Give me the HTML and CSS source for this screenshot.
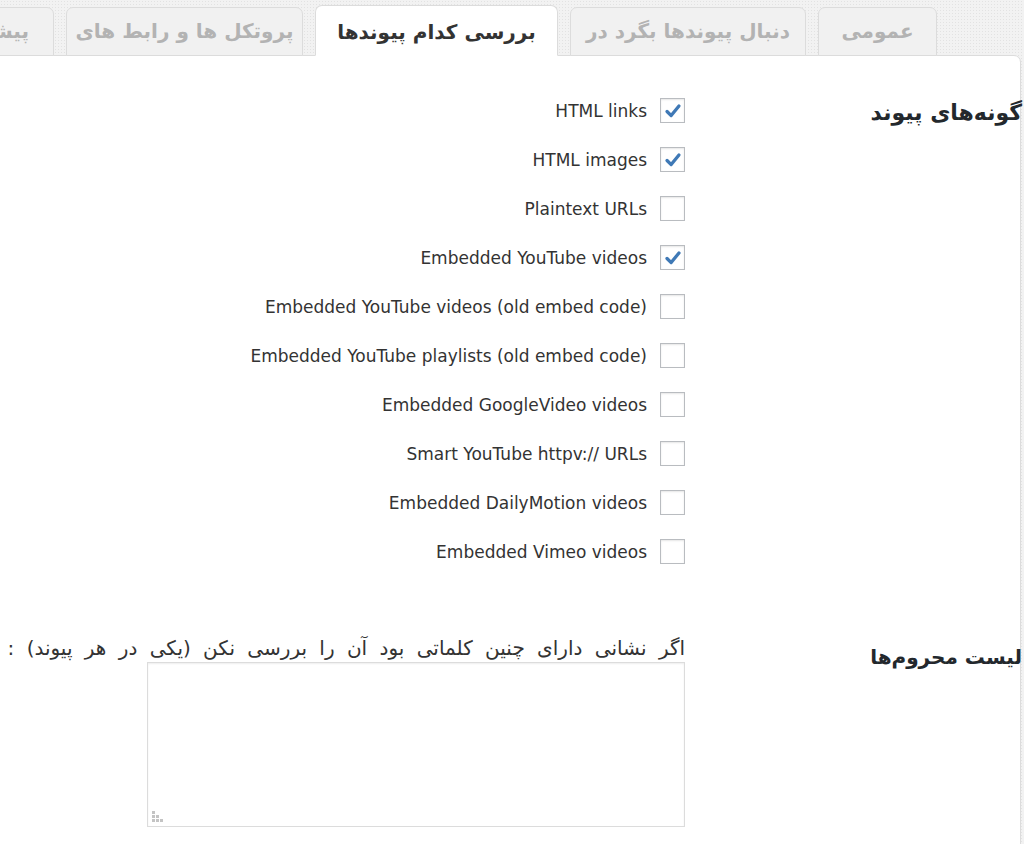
FILE: index.html
```html
<!DOCTYPE html>
<html lang="fa" dir="rtl">
<head>
<meta charset="utf-8">
<title>تنظیمات</title>
<link rel="stylesheet" href="styles.css">
</head>
<body>
<div class="page">
  <div class="wrap">
    <nav class="tabs">
      <a class="tab tab-general">عمومی</a>
      <a class="tab tab-where">دنبال پیوندها بگرد در</a>
      <a class="tab tab-which active">بررسی کدام پیوندها</a>
      <a class="tab tab-proto">پروتکل ها و رابط های</a>
      <a class="tab tab-adv">پیشرفته</a>
    </nav>
    <div class="panel">
      <div class="row row-types">
        <div class="th th-types">گونه‌های پیوند</div>
        <div class="td">
          <ul class="checks">
            <li><span class="box"><svg viewBox="0 0 24 24"><path d="M5.5 12.5 L10 17 L18.5 6.5"/></svg></span><span class="lbl">HTML links</span></li>
            <li><span class="box"><svg viewBox="0 0 24 24"><path d="M5.5 12.5 L10 17 L18.5 6.5"/></svg></span><span class="lbl">HTML images</span></li>
            <li><span class="box"></span><span class="lbl">Plaintext URLs</span></li>
            <li><span class="box"><svg viewBox="0 0 24 24"><path d="M5.5 12.5 L10 17 L18.5 6.5"/></svg></span><span class="lbl">Embedded YouTube videos</span></li>
            <li><span class="box"></span><span class="lbl">Embedded YouTube videos (old embed code)</span></li>
            <li><span class="box"></span><span class="lbl">Embedded YouTube playlists (old embed code)</span></li>
            <li><span class="box"></span><span class="lbl">Embedded GoogleVideo videos</span></li>
            <li><span class="box"></span><span class="lbl">Smart YouTube httpv:// URLs</span></li>
            <li><span class="box"></span><span class="lbl">Embedded DailyMotion videos</span></li>
            <li><span class="box"></span><span class="lbl">Embedded Vimeo videos</span></li>
          </ul>
        </div>
      </div>
      <div class="row row-exclude">
        <div class="th th-exclude">لیست محروم‌ها</div>
        <div class="td">
          <p class="desc">اگر نشانی دارای چنین کلماتی بود آن را بررسی نکن (یکی در هر پیوند) :</p>
          <div class="area">
            <textarea class="excl"></textarea>
            <span class="grip">
              <i></i><i></i><i></i>
              <i></i><i></i><i></i>
            </span>
          </div>
        </div>
      </div>
    </div>
  </div>
</div>
</body>
</html>
```

FILE: styles.css
```css
html, body {
  margin: 0;
  padding: 0;
}
body {
  direction: rtl;
  font-family: "DejaVu Sans", "Noto Sans", sans-serif;
  color: #444;
  background-color: #f2f2f2;
  background-image: radial-gradient(circle, #e2e2e2 0.7px, transparent 0.9px);
  background-size: 3px 3px;
}
.page {
  width: 1024px;
  height: 844px;
  overflow: hidden;
}
.wrap {
  width: 1400px;
  padding-right: 3px;
}
.tabs {
  display: flex;
  align-items: flex-end;
  gap: 12px;
  height: 56px;
  padding-right: 84px;
  margin-bottom: -1px;
  position: relative;
  z-index: 1;
}
.tab {
  box-sizing: border-box;
  height: 49px;
  line-height: 47px;
  padding: 0 22px;
  border: 1px solid #dcdcdc;
  border-radius: 7px 7px 0 0;
  background: #f1f1f1;
  color: #b3b3b3;
  font-weight: bold;
  font-size: 20px;
  text-align: center;
  white-space: nowrap;
}
.tab-general { width: 119px; padding: 0; }
.tab-where { width: 236px; padding: 0; }
.tab-which { width: 243px; padding: 0; }
.tab-proto { width: 237px; padding: 0; }
.tab-adv { padding: 0 24px; }
.tab.active {
  height: 51px;
  line-height: 52px;
  background: #fff;
  color: #333;
  border-bottom-color: #fff;
}
.panel {
  background: #fff;
  border: 1px solid #dcdcdc;
  border-top-right-radius: 7px;
  height: 900px;
}
.row {
  display: flex;
}
.th {
  width: 320px;
  flex: none;
  box-sizing: border-box;
  font-weight: bold;
  line-height: 30px;
  color: #23282d;
  margin-right: -2px;
}
.th-types { font-size: 22px; }
.th-exclude { font-size: 20px; }
.td {
  flex: 1;
  padding-right: 17px;
}
.row-types .th { padding-top: 42px; }
.row-types .td { padding-top: 30px; }
.checks {
  list-style: none;
  margin: 0;
  padding: 0;
}
.checks li {
  display: flex;
  align-items: center;
  gap: 13px;
  height: 49px;
}
.box {
  box-sizing: border-box;
  width: 25px;
  height: 25px;
  border: 1px solid #b9bcc0;
  background: #fff;
  box-shadow: inset 0 1px 2px rgba(0, 0, 0, 0.1);
  display: flex;
  align-items: center;
  justify-content: center;
}
.box svg {
  width: 22px;
  height: 22px;
}
.box path {
  fill: none;
  stroke: #3f79b6;
  stroke-width: 3.6;
  stroke-linecap: round;
  stroke-linejoin: round;
}
.lbl {
  direction: ltr;
  unicode-bidi: isolate;
  font-size: 17px;
  color: #333;
  white-space: nowrap;
}
.row-exclude .th { padding-top: 66px; }
.row-exclude .td { padding-top: 59px; }
.desc {
  margin: 0;
  font-size: 20px;
  line-height: 27px;
  word-spacing: 6px;
  color: #333;
  white-space: nowrap;
}
.area {
  position: relative;
  width: 538px;
  height: 165px;
}
.excl {
  display: block;
  box-sizing: border-box;
  width: 538px;
  height: 165px;
  margin: 0;
  border: 1px solid #dcdcdc;
  box-shadow: inset 0 1px 2px rgba(0, 0, 0, 0.07);
  background: #fff;
  resize: none;
  font-family: "DejaVu Sans", sans-serif;
}
.grip {
  position: absolute;
  left: 5px;
  bottom: 5px;
  width: 11px;
  height: 11px;
  display: grid;
  grid-template-columns: repeat(3, 3px);
  grid-template-rows: repeat(3, 3px);
  gap: 1px;
  direction: ltr;
}
.grip i {
  background: #c4c4c4;
}
.grip i:nth-child(1) { grid-area: 1 / 1; }
.grip i:nth-child(2) { grid-area: 2 / 1; }
.grip i:nth-child(3) { grid-area: 2 / 2; }
.grip i:nth-child(4) { grid-area: 3 / 1; }
.grip i:nth-child(5) { grid-area: 3 / 2; }
.grip i:nth-child(6) { grid-area: 3 / 3; }
```
